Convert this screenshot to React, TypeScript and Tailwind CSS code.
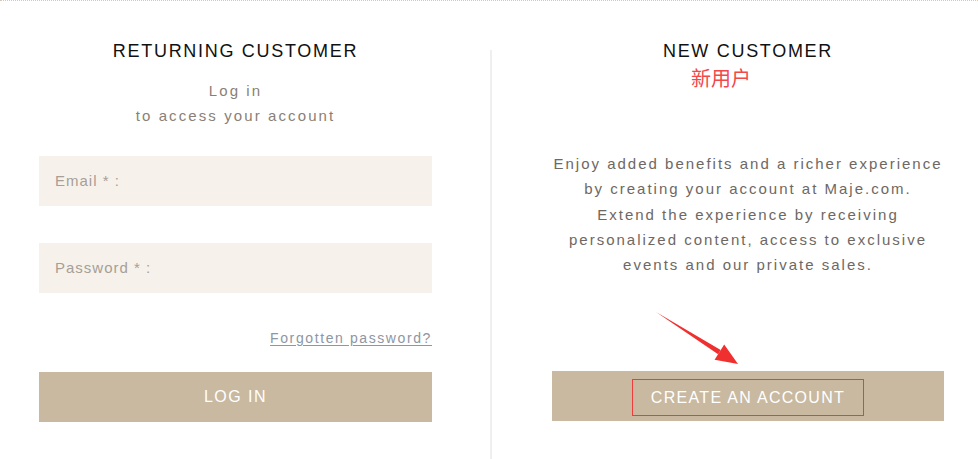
import React from 'react';

const font = { fontFamily: '"Liberation Sans", "Noto Sans CJK SC", sans-serif' };

function ReturningCustomer() {
  return (
    <div className="w-[393px] flex flex-col">
      <h2 className="text-center text-[18px] leading-[24px] tracking-[1.7px] text-[#111]">RETURNING CUSTOMER</h2>
      <p className="mt-[15px] text-center text-[15px] leading-[25px] tracking-[2.1px] text-[#8a7f76]">
        Log in
        <br />
        to access your account
      </p>

      {/* Fields */}
      <div className="mt-[28px] h-[50px] bg-[#f6f2eb] flex items-center px-[16px]">
        <span className="text-[15px] tracking-[1px] text-[#a79e96]">Email * :</span>
      </div>
      <div className="mt-[37px] h-[50px] bg-[#f6f2eb] flex items-center px-[16px]">
        <span className="text-[15px] tracking-[1px] text-[#a79e96]">Password * :</span>
      </div>

      <div className="mt-[35px] flex justify-end">
        <a className="text-[14px] leading-[20px] tracking-[1.6px] text-[#8d96a3] underline underline-offset-2">Forgotten password?</a>
      </div>

      <button className="mt-[24px] h-[50px] bg-[#c8b9a0] text-white text-[16px] tracking-[1.5px]">LOG IN</button>
    </div>
  );
}

function NewCustomer() {
  return (
    <div className="relative w-[392px] flex flex-col">
      <h2 className="text-center text-[18px] leading-[24px] tracking-[1.7px] text-[#111]">NEW CUSTOMER</h2>
      <div className="mt-[4px] pl-[139px] text-[20px] leading-[24px] text-[#f2484a]">新用户</div>
      <p className="mt-[60px] text-center text-[15px] leading-[25.3px] tracking-[2px] text-[#6e6863] whitespace-nowrap">
        Enjoy added benefits and a richer experience
        <br />
        by creating your account at Maje.com.
        <br />
        Extend the experience by receiving
        <br />
        personalized content, access to exclusive
        <br />
        events and our private sales.
      </p>

      <button className="mt-[94px] h-[50px] bg-[#c8b9a0] flex items-start justify-center pt-[8px]">
        <span className="border border-[#f03c3c] px-[18px] h-[37px] flex items-center text-white text-[16px] tracking-[1.3px]">
          CREATE AN ACCOUNT
        </span>
      </button>

      {/* annotation arrow */}
      <svg className="absolute left-[102px] top-[271px]" width="90" height="60" viewBox="0 0 90 60">
        <path d="M2 2 L66.7 40.1 L64.1 44.3 Z" fill="#f0302e" />
        <path d="M60.6 49.8 L84 54 L70.2 34.6 Z" fill="#f0302e" />
      </svg>
    </div>
  );
}

export default function App() {
  return (
    <div style={font} className="w-[978px] h-[459px] bg-white overflow-hidden border-t border-dotted border-[#d6c9b3]">
      <div className="flex pl-[39px] pt-[38px] h-full">
        <ReturningCustomer />
        <div className="ml-[58px] mr-[60px] mt-[11px] w-[2px] bg-[#efefef]" />
        <NewCustomer />
      </div>
    </div>
  );
}
